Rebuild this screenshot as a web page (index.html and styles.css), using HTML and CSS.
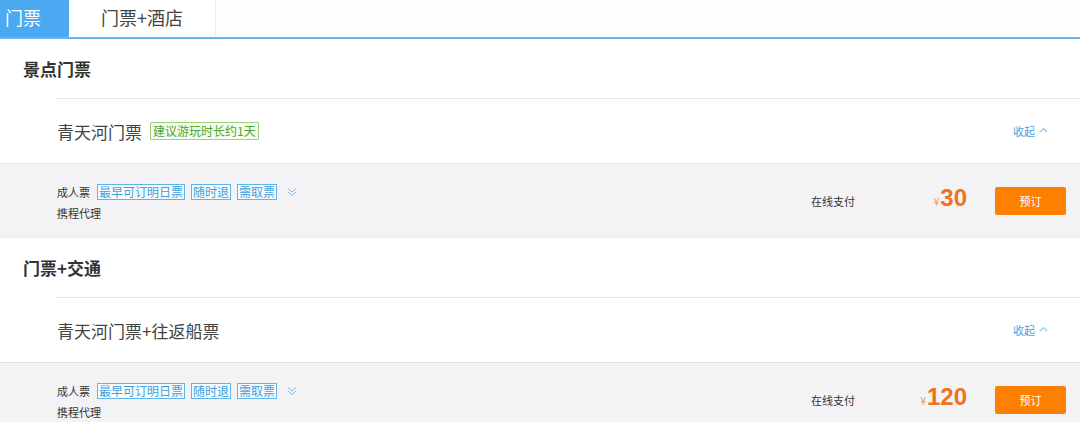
FILE: index.html
```html
<!DOCTYPE html>
<html lang="zh">
<head>
<meta charset="utf-8">
<link rel="stylesheet" href="styles.css">
</head>
<body>
<div class="page">
  <div class="tabs">
    <div class="tab active">门票</div>
    <div class="tab">门票+酒店</div>
  </div>

  <div class="section-title">景点门票</div>
  <div class="product">
    <span class="product-name">青天河门票</span>
    <span class="tag-green">建议游玩时长约1天</span>
    <span class="collapse">收起 <svg width="9" height="6" viewBox="0 0 9 6"><path d="M1 5 L4.5 1.5 L8 5" fill="none" stroke="#8cc4ec" stroke-width="1.1"/></svg></span>
  </div>
  <div class="offer">
    <div class="offer-left">
      <div class="offer-row">
        <span class="ticket-type">成人票</span>
        <span class="tag-blue">最早可订明日票</span>
        <span class="tag-blue">随时退</span>
        <span class="tag-blue">需取票</span>
        <svg class="more" width="10" height="10" viewBox="0 0 10 10"><path d="M1 1.5 L5 5 L9 1.5 M1 5 L5 8.5 L9 5" fill="none" stroke="#7fb6e4" stroke-width="1"/></svg>
      </div>
      <div class="agent">携程代理</div>
    </div>
    <div class="offer-right">
      <span class="pay">在线支付</span>
      <span class="price"><span class="yen">¥</span>30</span>
      <button class="book">预订</button>
    </div>
  </div>

  <div class="section-title">门票+交通</div>
  <div class="product">
    <span class="product-name">青天河门票+往返船票</span>
    <span class="collapse">收起 <svg width="9" height="6" viewBox="0 0 9 6"><path d="M1 5 L4.5 1.5 L8 5" fill="none" stroke="#8cc4ec" stroke-width="1.1"/></svg></span>
  </div>
  <div class="offer">
    <div class="offer-left">
      <div class="offer-row">
        <span class="ticket-type">成人票</span>
        <span class="tag-blue">最早可订明日票</span>
        <span class="tag-blue">随时退</span>
        <span class="tag-blue">需取票</span>
        <svg class="more" width="10" height="10" viewBox="0 0 10 10"><path d="M1 1.5 L5 5 L9 1.5 M1 5 L5 8.5 L9 5" fill="none" stroke="#7fb6e4" stroke-width="1"/></svg>
      </div>
      <div class="agent">携程代理</div>
    </div>
    <div class="offer-right">
      <span class="pay">在线支付</span>
      <span class="price"><span class="yen">¥</span>120</span>
      <button class="book">预订</button>
    </div>
  </div>
</div>
</body>
</html>
```

FILE: styles.css
```css
* { box-sizing: border-box; }
html, body { margin: 0; padding: 0; background: #fff; }
body {
  font-family: "Noto Sans CJK SC", "Noto Sans", sans-serif;
  color: #333;
  width: 1080px;
  overflow: hidden;
}
.page { width: 1080px; }

.tabs {
  display: flex;
  height: 39px;
  border-bottom: 2px solid #6ab4ea;
  background: #fdfefe;
}
.tab {
  height: 37px;
  line-height: 35px;
  font-size: 18px;
  color: #444;
  width: 147px;
  text-align: center;
  border-right: 1px solid #ececec;
  background: #fff;
}
.tab.active {
  width: 69px;
  text-align: left;
  padding-left: 5px;
  background: #4aa9f0;
  color: #fff;
  border-right: none;
}

.section-title {
  height: 59px;
  display: flex;
  align-items: center;
  padding-left: 23px;
  font-size: 17px;
  font-weight: bold;
  color: #333;
}

.product {
  margin-left: 56px;
  height: 65px;
  border-top: 1px solid #e8e8e8;
  display: flex;
  align-items: center;
  padding-left: 1px;
  padding-right: 32px;
}
.product-name {
  font-size: 17px;
  color: #444;
}
.tag-green {
  margin-left: 8px;
  font-size: 12px;
  line-height: 16px;
  padding: 0 2px;
  color: #4fa52a;
  border: 1px solid #9ad37a;
  background: #f6fcf1;
  border-radius: 1px;
}
.collapse {
  margin-left: auto;
  font-size: 11px;
  color: #4aa3e0;
  display: flex;
  align-items: center;
  gap: 4px;
}
.collapse svg { margin-top: -2px; }

.offer {
  height: 75px;
  background: #f3f3f5;
  border-top: 1px solid #e4e4e6;
  border-bottom: 1px solid #ebebeb;
  display: flex;
  align-items: center;
  padding-left: 57px;
  padding-right: 14px;
}
.offer-left {
  display: flex;
  flex-direction: column;
  gap: 5px;
  padding-top: 3px;
}
.offer-row {
  display: flex;
  align-items: center;
}
.ticket-type {
  font-size: 11px;
  color: #333;
  margin-right: 7px;
}
.tag-blue {
  font-size: 12px;
  line-height: 14px;
  padding: 0 1px;
  color: #3da0da;
  border: 1px solid #5db4e6;
  background: #f8fcff;
  margin-right: 6px;
}
.more { margin-left: 4px; }
.agent {
  font-size: 11px;
  color: #333;
  line-height: 16px;
}

.offer-right {
  margin-left: auto;
  display: flex;
  align-items: center;
}
.pay {
  width: 100px;
  font-size: 11px;
  color: #333;
}
.price {
  width: 56px;
  text-align: right;
  font-family: "Liberation Sans", "Noto Sans", sans-serif;
  font-weight: bold;
  font-size: 24px;
  color: #f07122;
  line-height: 28px;
}
.yen {
  font-size: 10px;
  font-weight: normal;
  color: #f59a55;
  margin-right: 1px;
}
.book {
  margin-left: 28px;
  width: 71px;
  height: 28px;
  border: none;
  border-radius: 2px;
  background: #fd8000;
  color: #fff;
  font-family: "Noto Sans CJK SC", sans-serif;
  font-size: 11px;
  padding: 0;
}
```
